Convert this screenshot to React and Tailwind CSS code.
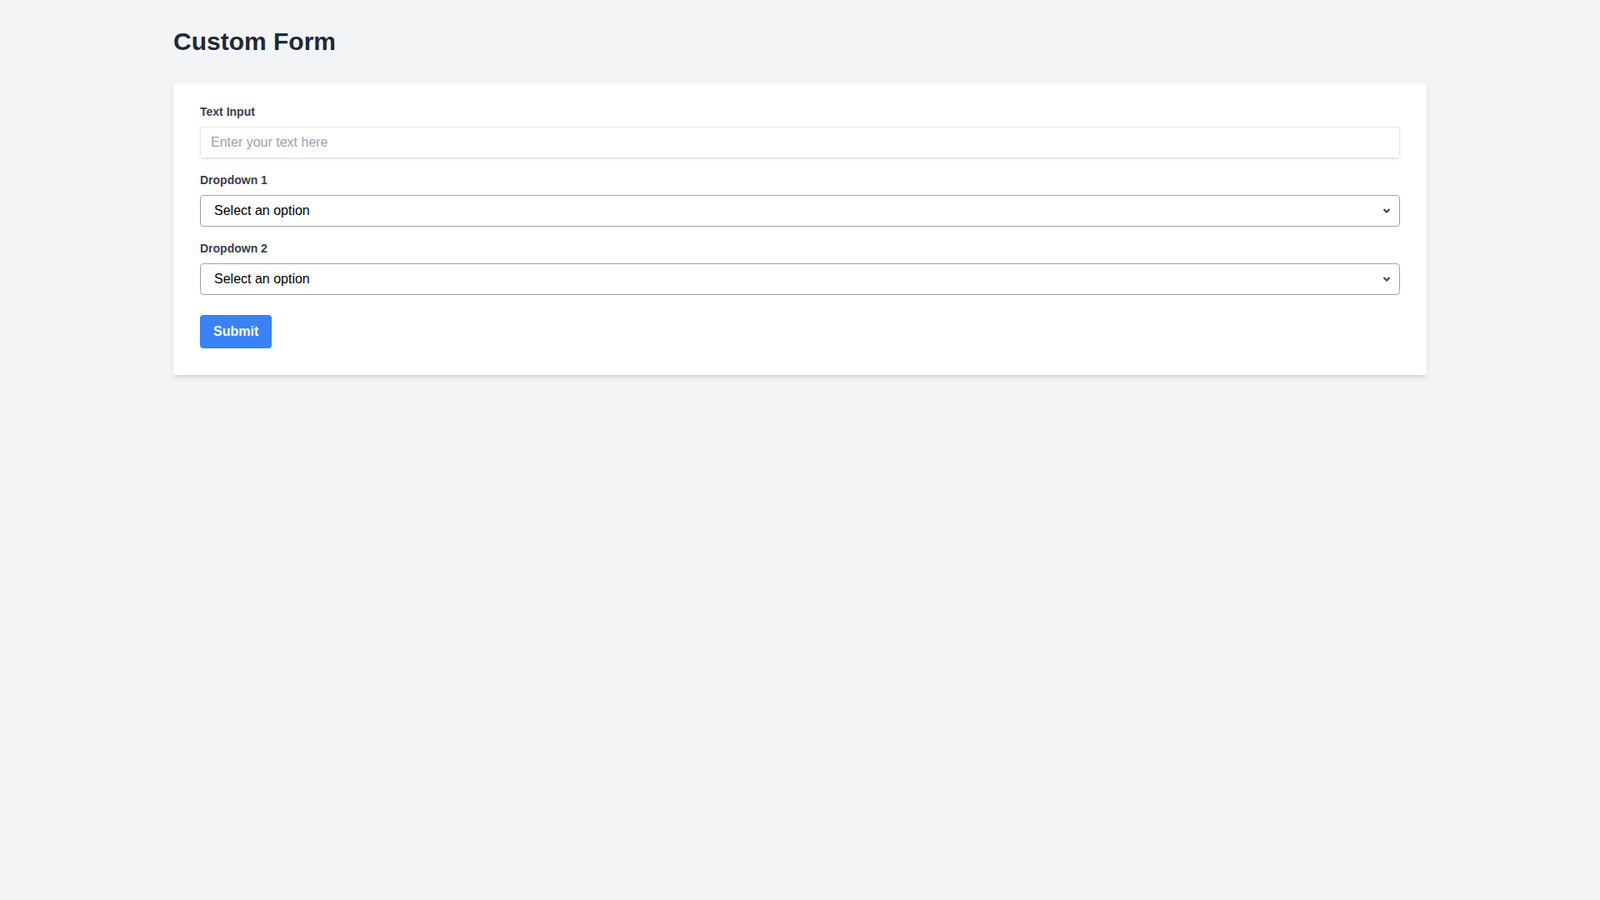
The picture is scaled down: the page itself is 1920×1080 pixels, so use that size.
function Select({ id }) {
  return (
    <div className="relative">
      <select
        id={id}
        defaultValue=""
        className="appearance-none w-full bg-white border border-[#9ca3af] rounded py-2 pl-4 pr-10 text-base leading-tight text-black focus:outline-none"
      >
        <option value="">Select an option</option>
        <option value="1">Option 1</option>
        <option value="2">Option 2</option>
        <option value="3">Option 3</option>
      </select>
      <svg
        className="pointer-events-none absolute right-[11px] top-1/2 -translate-y-1/2"
        width="10"
        height="7"
        viewBox="0 0 10 7"
        fill="none"
      >
        <polyline points="1.5,1.5 5,5 8.5,1.5" stroke="#374151" strokeWidth="2" />
      </svg>
    </div>
  );
}

export default function App() {
  return (
    <div className="min-h-screen bg-gray-100 font-['Liberation_Sans',Arial,sans-serif]">
      <div className="container mx-auto px-4 py-8">
        <h1 className="text-3xl font-bold text-gray-800 mb-8">Custom Form</h1>
        <form className="bg-white shadow-md rounded px-8 pt-6 pb-8">
          <div className="mb-4">
            <label htmlFor="text" className="block text-gray-700 text-sm font-bold mb-2">
              Text Input
            </label>
            <input
              id="text"
              type="text"
              placeholder="Enter your text here"
              className="shadow-sm appearance-none border border-gray-200 rounded w-full py-2 px-3 text-base text-gray-700 leading-tight placeholder:text-gray-400 focus:outline-none"
            />
          </div>
          <div className="mb-4">
            <label htmlFor="dd1" className="block text-gray-700 text-sm font-bold mb-2">
              Dropdown 1
            </label>
            <Select id="dd1" />
          </div>
          <div className="mb-6">
            <label htmlFor="dd2" className="block text-gray-700 text-sm font-bold mb-2">
              Dropdown 2
            </label>
            <Select id="dd2" />
          </div>
          <button
            type="button"
            className="bg-[#3b82f6] hover:bg-blue-700 text-white text-base font-bold py-2 px-4 rounded"
          >
            Submit
          </button>
        </form>
      </div>
    </div>
  );
}
